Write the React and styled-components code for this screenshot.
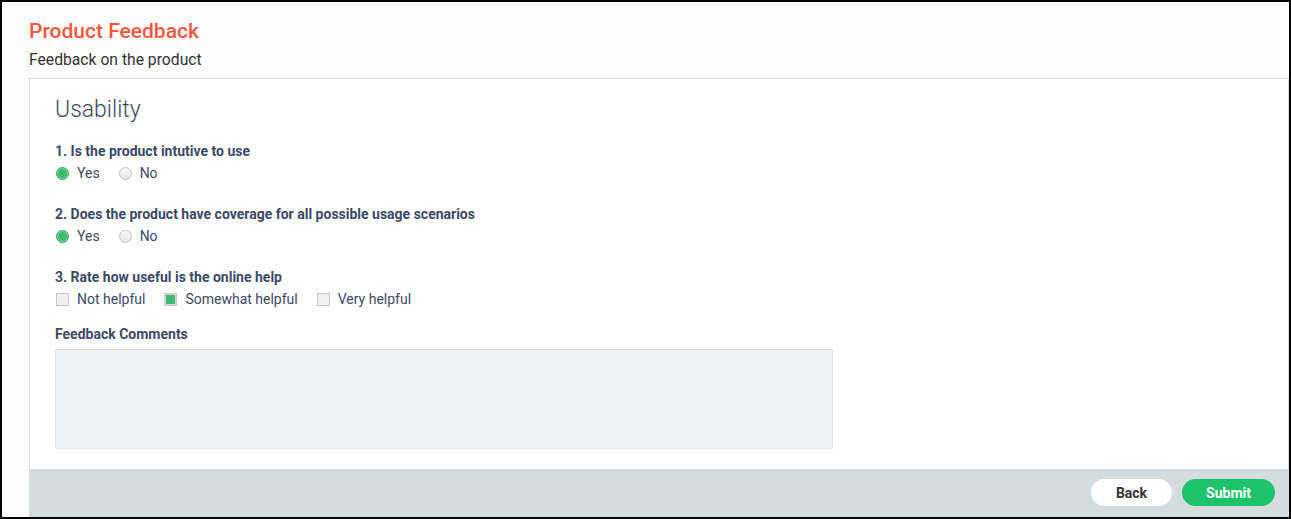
import React, { useState } from "react";
import styled, { createGlobalStyle } from "styled-components";

const GlobalStyle = createGlobalStyle`
  html, body {
    margin: 0;
    padding: 0;
  }
  body {
    font-family: Roboto, "Liberation Sans", Arial, sans-serif;
  }
  * {
    box-sizing: border-box;
  }
`;

const Frame = styled.div`
  display: flex;
  flex-direction: column;
  height: 519px;
  border: 2px solid #000;
  background: #fcfcfc;
`;

const Header = styled.header`
  padding: 17px 0 8px 27px;
`;

const Title = styled.h1`
  margin: 0;
  font-size: 21px;
  line-height: 24px;
  font-weight: 500;
  color: #f2583e;
`;

const Subtitle = styled.p`
  margin: 7px 0 0;
  font-size: 15.7px;
  line-height: 20px;
  color: #333;
`;

const Card = styled.section`
  flex: 1;
  display: flex;
  flex-direction: column;
  margin-left: 27px;
  border: 1px solid #dcdcdc;
  border-bottom: none;
  background: #fff;
`;

const CardBody = styled.div`
  padding: 17px 25px 0;
`;

const SectionTitle = styled.h2`
  margin: 0 0 18px;
  font-size: 23px;
  line-height: 28px;
  font-weight: 300;
  color: #3a4a5e;
`;

const Question = styled.div`
  margin-bottom: ${({ $gap }) => $gap}px;
`;

const Label = styled.div`
  font-size: 14px;
  line-height: 18px;
  font-weight: 700;
  color: #3b4a66;
`;

const Options = styled.div`
  display: flex;
  gap: 18px;
  margin-top: 4px;
`;

const Option = styled.label`
  display: flex;
  align-items: center;
  gap: 8px;
  font-size: 14px;
  line-height: 18px;
  color: #3b4a66;
  cursor: pointer;
`;

const Radio = styled.span`
  width: 13px;
  height: 13px;
  margin-left: 1px;
  border-radius: 50%;
  border: 1px solid ${({ $on }) => ($on ? "#3aa565" : "#c4c4c4")};
  background: ${({ $on }) =>
    $on ? "#3dbb6d" : "linear-gradient(#fafafa, #e6e6e6)"};
  box-shadow: ${({ $on }) => ($on ? "inset 0 0 0 1px #7ed6a0" : "none")};
`;

const Check = styled.span`
  width: 13px;
  height: 13px;
  margin-left: 1px;
  border: 1px solid #c8c8c8;
  background: ${({ $on }) => ($on ? "#3dbb6d" : "#f0f0f0")};
  box-shadow: ${({ $on }) => ($on ? "inset 0 0 0 1px #d8d8d8" : "none")};
`;

const Comments = styled.textarea`
  display: block;
  width: 778px;
  height: 100px;
  margin-top: 6px;
  border: 1px solid #e4e5e6;
  border-top-color: #d2d3d4;
  border-radius: 2px;
  background: #f0f1f2;
  resize: none;
  outline: none;
`;

const Footer = styled.footer`
  display: flex;
  justify-content: flex-end;
  gap: 10px;
  margin-top: auto;
  padding: 10px 13px 11px 0;
  background: #d5dcde;
`;

const Button = styled.button`
  height: 27px;
  width: ${({ $w }) => $w}px;
  border: none;
  border-radius: 14px;
  font-family: inherit;
  font-size: 14px;
  font-weight: 700;
  color: ${({ $primary }) => ($primary ? "#fff" : "#333")};
  background: ${({ $primary }) => ($primary ? "#1dc36a" : "#fff")};
  cursor: pointer;
`;

const yesNo = ["Yes", "No"];
const helpful = ["Not helpful", "Somewhat helpful", "Very helpful"];

export default function App() {
  const [q1, setQ1] = useState("Yes");
  const [q2, setQ2] = useState("Yes");
  const [q3, setQ3] = useState(["Somewhat helpful"]);

  const toggle = (v) =>
    setQ3((cur) => (cur.includes(v) ? cur.filter((c) => c !== v) : [...cur, v]));

  return (
    <>
      <GlobalStyle />
      <Frame>
        <Header>
          <Title>Product Feedback</Title>
          <Subtitle>Feedback on the product</Subtitle>
        </Header>
        <Card>
          <CardBody>
            <SectionTitle>Usability</SectionTitle>
            <Question $gap={23}>
              <Label>1. Is the product intutive to use</Label>
              <Options>
                {yesNo.map((v) => (
                  <Option key={v} onClick={() => setQ1(v)}>
                    <Radio $on={q1 === v} />
                    {v}
                  </Option>
                ))}
              </Options>
            </Question>
            <Question $gap={23}>
              <Label>2. Does the product have coverage for all possible usage scenarios</Label>
              <Options>
                {yesNo.map((v) => (
                  <Option key={v} onClick={() => setQ2(v)}>
                    <Radio $on={q2 === v} />
                    {v}
                  </Option>
                ))}
              </Options>
            </Question>
            <Question $gap={17}>
              <Label>3. Rate how useful is the online help</Label>
              <Options>
                {helpful.map((v) => (
                  <Option key={v} onClick={() => toggle(v)}>
                    <Check $on={q3.includes(v)} />
                    {v}
                  </Option>
                ))}
              </Options>
            </Question>
            <Label>Feedback Comments</Label>
            <Comments />
          </CardBody>
          <Footer>
            <Button $w={81}>Back</Button>
            <Button $w={93} $primary>Submit</Button>
          </Footer>
        </Card>
      </Frame>
    </>
  );
}
